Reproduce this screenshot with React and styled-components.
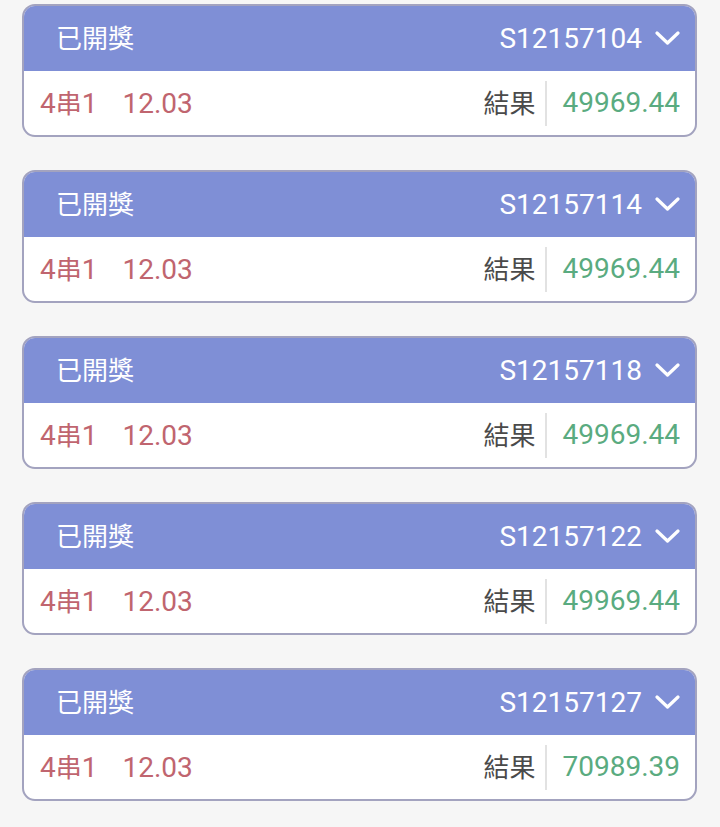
import React from "react";
import styled, { createGlobalStyle } from "styled-components";

const GlobalStyle = createGlobalStyle`
  html, body { margin: 0; padding: 0; background: #f6f6f6; }
  body { font-family: Roboto, "Noto Sans CJK TC", sans-serif; }
`;

const List = styled.div`
  display: flex;
  flex-direction: column;
  gap: 33px;
  padding: 4px 23px 20px 22px;
`;

const Card = styled.div`
  border: 2px solid #a3a3bf;
  border-radius: 13px;
  overflow: hidden;
  background: #ffffff;
`;

const Header = styled.div`
  height: 65px;
  background: #7f8fd6;
  display: flex;
  align-items: center;
  justify-content: space-between;
  padding: 0 15px 0 32px;
  color: #ffffff;
  font-size: 28px;
  line-height: 1;
`;

const Cjk = styled.span`
  font-family: "Noto Sans CJK TC", sans-serif;
  font-size: 26px;
  line-height: 1;
`;

const Status = styled(Cjk)`
  padding-bottom: 4px;
`;

const OrderNo = styled.div`
  display: flex;
  align-items: center;
  gap: 13px;
`;

const Body = styled.div`
  height: 64px;
  display: flex;
  align-items: center;
  padding: 0 15px 0 16px;
  font-size: 28px;
  line-height: 1;
`;

const Bet = styled.div`
  color: #c0656f;
  flex: 1;
  display: flex;
  align-items: baseline;
  gap: 25px;
`;

const Label = styled(Cjk)`
  color: #4a4a4a;
  padding-right: 10px;
  padding-bottom: 2px;
`;

const Divider = styled.span`
  width: 2px;
  height: 45px;
  background: #e2e2e2;
`;

const Amount = styled.span`
  color: #5aab80;
  padding-left: 15px;
`;

const Chevron = () => (
  <svg width="25" height="15" viewBox="0 0 25 15" fill="none">
    <path d="M2 2 L12.5 12 L23 2" stroke="#fff" strokeWidth="3.2" strokeLinecap="round" strokeLinejoin="round" />
  </svg>
);

const rows = [
  { id: "S12157104", amount: "49969.44" },
  { id: "S12157114", amount: "49969.44" },
  { id: "S12157118", amount: "49969.44" },
  { id: "S12157122", amount: "49969.44" },
  { id: "S12157127", amount: "70989.39" },
];

export default function App() {
  return (
    <>
      <GlobalStyle />
      <List>
        {rows.map((r) => (
          <Card key={r.id}>
            <Header>
              <Status>已開獎</Status>
              <OrderNo>
                <span>{r.id}</span>
                <Chevron />
              </OrderNo>
            </Header>
            <Body>
              <Bet>
                <span>
                  4<Cjk>串</Cjk>1
                </span>
                <span>12.03</span>
              </Bet>
              <Label>結果</Label>
              <Divider />
              <Amount>{r.amount}</Amount>
            </Body>
          </Card>
        ))}
      </List>
    </>
  );
}
